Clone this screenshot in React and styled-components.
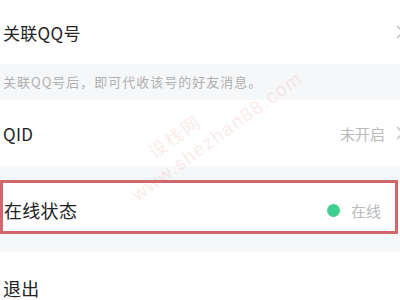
import React from 'react';
import styled, { createGlobalStyle } from 'styled-components';

const GlobalStyle = createGlobalStyle`
  html, body {
    margin: 0;
    padding: 0;
    background: #ffffff;
    overflow: hidden;
  }
  body {
    font-family: "Noto Sans CJK SC", "Noto Sans", sans-serif;
  }
`;

function Chevron() {
  return (
    <Arrow viewBox="0 0 10 16" width="10" height="16">
      <path d="M2 2 L8 8 L2 14" fill="none" stroke="#c8c8c8" strokeWidth="1.6" />
    </Arrow>
  );
}

export default function App() {
  return (
    <Page>
      <GlobalStyle />
      <Row $height={64}>
        <Title>关联QQ号</Title>
        <Chevron />
      </Row>
      <Hint>关联QQ号后，即可代收该号的好友消息。</Hint>
      <Row $height={66}>
        <Title>QID</Title>
        <Right>
          <Value>未开启</Value>
          <Chevron />
        </Right>
      </Row>
      <Gap $height={14} />
      <Highlight>
        <Title $size={18}>在线状态</Title>
        <Right $gap={8}>
          <Dot />
          <Value>在线</Value>
        </Right>
      </Highlight>
      <Gap $height={18} />
      <Row $height={72}>
        <Title $size={18}>退出</Title>
      </Row>
      <Watermark>
        <Mark>设栈网</Mark>
        <Mark $latin>www.shezhan88.com</Mark>
      </Watermark>
    </Page>
  );
}

const Page = styled.div`
  position: relative;
  width: 400px;
  height: 300px;
  overflow: hidden;
  background: #ffffff;
`;

const Row = styled.div`
  display: flex;
  align-items: center;
  justify-content: space-between;
  height: ${p => p.$height}px;
  padding: 0 0 0 3px;
  box-sizing: border-box;
  background: #ffffff;
`;

const Title = styled.span`
  font-size: ${p => p.$size || 17}px;
  color: #222222;
  letter-spacing: 0.3px;
`;

const Right = styled.div`
  display: flex;
  align-items: center;
  gap: ${p => p.$gap || 10}px;
`;

const Value = styled.span`
  font-size: 15px;
  color: #b9b9b9;
`;

const Arrow = styled.svg`
  flex: none;
  margin-right: -5px;
`;

const Hint = styled.div`
  height: 36px;
  padding: 0 0 2px 3px;
  box-sizing: border-box;
  display: flex;
  align-items: center;
  background: #f6f7f9;
  font-size: 13px;
  color: #b0b0b0;
  letter-spacing: 1px;
`;

const Gap = styled.div`
  height: ${p => p.$height}px;
  background: #f6f7f9;
`;

const Highlight = styled.div`
  display: flex;
  align-items: center;
  justify-content: space-between;
  height: 54px;
  width: 398px;
  box-sizing: border-box;
  padding: 6px 14px 0 1px;
  border: 3px solid #d0686b;
  background: #ffffff;
`;

const Dot = styled.span`
  width: 13px;
  height: 13px;
  border-radius: 50%;
  background: #3fcf8f;
  margin-right: 3px;
`;

const Watermark = styled.div`
  position: absolute;
  left: 112px;
  top: 166px;
  display: flex;
  flex-direction: column;
  transform: rotate(-36deg);
  transform-origin: left top;
  pointer-events: none;
`;

const Mark = styled.span`
  font-family: ${p => (p.$latin ? '"Liberation Sans", sans-serif' : '"Noto Sans CJK SC", sans-serif')};
  font-size: ${p => (p.$latin ? 19 : 18)}px;
  color: rgba(225, 120, 120, 0.17);
  letter-spacing: ${p => (p.$latin ? 1.5 : 2)}px;
  margin-left: ${p => (p.$latin ? 0 : 38)}px;
  line-height: 25px;
`;
